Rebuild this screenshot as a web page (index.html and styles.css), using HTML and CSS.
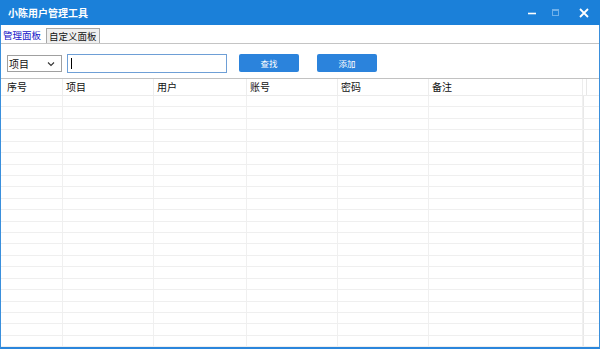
FILE: index.html
```html
<!DOCTYPE html>
<html lang="zh">
<head>
<meta charset="utf-8">
<title>小陈用户管理工具</title>
<link rel="stylesheet" href="styles.css">
</head>
<body>
<div class="window">
  <div class="titlebar">
    <span class="title">小陈用户管理工具</span>
    <div class="controls">
      <svg class="ctl ctl-min" width="10" height="10" viewBox="0 0 10 10"><path d="M1 5.5h8" stroke="#fff" stroke-width="1.6"/></svg>
      <svg class="ctl ctl-max" width="10" height="10" viewBox="0 0 10 10"><rect x="1.5" y="1.5" width="6" height="6" fill="none" stroke="#6fb0ea" stroke-width="1"/><path d="M1.5 2.5h6" stroke="#6fb0ea" stroke-width="1"/></svg>
      <svg class="ctl ctl-close" width="12" height="12" viewBox="0 0 12 12"><path d="M2 2l8 8M10 2l-8 8" stroke="#fff" stroke-width="1.8"/></svg>
    </div>
  </div>
  <div class="client">
    <div class="tabs">
      <div class="tab active">管理面板</div>
      <div class="tab">自定义面板</div>
    </div>
    <div class="toolbar">
      <div class="select"><span>项目</span><svg width="8" height="6" viewBox="0 0 8 6"><path d="M1 1.5l3 3 3-3" fill="none" stroke="#333" stroke-width="1.1"/></svg></div>
      <div class="input"><span class="caret"></span></div>
      <button class="btn btn-search">查找</button>
      <button class="btn btn-add">添加</button>
    </div>
    <div class="table">
      <div class="row head">
        <div class="cell first">序号</div><div class="cell">项目</div><div class="cell">用户</div><div class="cell">账号</div><div class="cell">密码</div><div class="cell">备注</div><div class="cell"></div>
      </div>
      <div class="body">
        <div class="row"><div class="cell"></div><div class="cell"></div><div class="cell"></div><div class="cell"></div><div class="cell"></div><div class="cell"></div><div class="cell"></div></div>
        <div class="row"><div class="cell"></div><div class="cell"></div><div class="cell"></div><div class="cell"></div><div class="cell"></div><div class="cell"></div><div class="cell"></div></div>
        <div class="row"><div class="cell"></div><div class="cell"></div><div class="cell"></div><div class="cell"></div><div class="cell"></div><div class="cell"></div><div class="cell"></div></div>
        <div class="row"><div class="cell"></div><div class="cell"></div><div class="cell"></div><div class="cell"></div><div class="cell"></div><div class="cell"></div><div class="cell"></div></div>
        <div class="row"><div class="cell"></div><div class="cell"></div><div class="cell"></div><div class="cell"></div><div class="cell"></div><div class="cell"></div><div class="cell"></div></div>
        <div class="row"><div class="cell"></div><div class="cell"></div><div class="cell"></div><div class="cell"></div><div class="cell"></div><div class="cell"></div><div class="cell"></div></div>
        <div class="row"><div class="cell"></div><div class="cell"></div><div class="cell"></div><div class="cell"></div><div class="cell"></div><div class="cell"></div><div class="cell"></div></div>
        <div class="row"><div class="cell"></div><div class="cell"></div><div class="cell"></div><div class="cell"></div><div class="cell"></div><div class="cell"></div><div class="cell"></div></div>
        <div class="row"><div class="cell"></div><div class="cell"></div><div class="cell"></div><div class="cell"></div><div class="cell"></div><div class="cell"></div><div class="cell"></div></div>
        <div class="row"><div class="cell"></div><div class="cell"></div><div class="cell"></div><div class="cell"></div><div class="cell"></div><div class="cell"></div><div class="cell"></div></div>
        <div class="row"><div class="cell"></div><div class="cell"></div><div class="cell"></div><div class="cell"></div><div class="cell"></div><div class="cell"></div><div class="cell"></div></div>
        <div class="row"><div class="cell"></div><div class="cell"></div><div class="cell"></div><div class="cell"></div><div class="cell"></div><div class="cell"></div><div class="cell"></div></div>
        <div class="row"><div class="cell"></div><div class="cell"></div><div class="cell"></div><div class="cell"></div><div class="cell"></div><div class="cell"></div><div class="cell"></div></div>
        <div class="row"><div class="cell"></div><div class="cell"></div><div class="cell"></div><div class="cell"></div><div class="cell"></div><div class="cell"></div><div class="cell"></div></div>
        <div class="row"><div class="cell"></div><div class="cell"></div><div class="cell"></div><div class="cell"></div><div class="cell"></div><div class="cell"></div><div class="cell"></div></div>
        <div class="row"><div class="cell"></div><div class="cell"></div><div class="cell"></div><div class="cell"></div><div class="cell"></div><div class="cell"></div><div class="cell"></div></div>
        <div class="row"><div class="cell"></div><div class="cell"></div><div class="cell"></div><div class="cell"></div><div class="cell"></div><div class="cell"></div><div class="cell"></div></div>
        <div class="row"><div class="cell"></div><div class="cell"></div><div class="cell"></div><div class="cell"></div><div class="cell"></div><div class="cell"></div><div class="cell"></div></div>
        <div class="row"><div class="cell"></div><div class="cell"></div><div class="cell"></div><div class="cell"></div><div class="cell"></div><div class="cell"></div><div class="cell"></div></div>
        <div class="row"><div class="cell"></div><div class="cell"></div><div class="cell"></div><div class="cell"></div><div class="cell"></div><div class="cell"></div><div class="cell"></div></div>
        <div class="row"><div class="cell"></div><div class="cell"></div><div class="cell"></div><div class="cell"></div><div class="cell"></div><div class="cell"></div><div class="cell"></div></div>
        <div class="row"><div class="cell"></div><div class="cell"></div><div class="cell"></div><div class="cell"></div><div class="cell"></div><div class="cell"></div><div class="cell"></div></div>
      </div>
    </div>
  </div>
</div>
</body>
</html>
```
FILE: styles.css
```css
* { box-sizing: border-box; }
html, body { margin: 0; padding: 0; }
body {
  width: 600px;
  height: 349px;
  overflow: hidden;
  background: #fff;
  font-family: "Noto Sans CJK SC", "Noto Sans", sans-serif;
  color: #222;
}
.window {
  width: 600px;
  height: 349px;
  display: flex;
  flex-direction: column;
}
.titlebar {
  height: 25px;
  flex: 0 0 25px;
  background: #1b80d9;
  display: flex;
  align-items: center;
  justify-content: space-between;
  padding-left: 8px;
}
.title {
  color: #fff;
  font-weight: bold;
  font-size: 10px;
  line-height: 12px;
}
.controls {
  display: flex;
  align-items: center;
  height: 25px;
}
.ctl { display: block; }
.ctl-min { margin-right: 14px; }
.ctl-max { margin-right: 17px; }
.ctl-close { margin-right: 10px; }
.client {
  flex: 1;
  display: flex;
  flex-direction: column;
  border-left: 1px solid #3a8fdc;
  border-right: 1px solid #3a8fdc;
  border-bottom: 2px solid #2a86dc;
  min-height: 0;
}
.tabs {
  margin-top: 2px;
  height: 17px;
  display: flex;
  align-items: flex-end;
  border-bottom: 1px solid #c4c4c4;
}
.tab {
  font-size: 9.5px;
  line-height: 12px;
  height: 15px;
  padding: 1px 2px 0 2px;
  background: #f0f0f0;
  border: 1px solid #a8a8a8;
  border-bottom: none;
  color: #111;
}
.tab.active {
  height: 17px;
  padding: 3px 4px 0 2px;
  background: #fff;
  border: none;
  color: #1515c8;
  margin-right: 1px;
}
.toolbar {
  margin-top: 10px;
  height: 19px;
  display: flex;
  align-items: flex-start;
  padding-left: 6px;
}
.select {
  margin-top: 1px;
  width: 55px;
  height: 17px;
  border: 1px solid #a0a0a0;
  display: flex;
  align-items: center;
  justify-content: space-between;
  padding: 0 6px 0 1px;
  font-size: 10px;
  color: #111;
}
.input {
  margin-left: 5px;
  width: 160px;
  height: 19px;
  border: 1px solid #6e9fd6;
  display: flex;
  align-items: center;
  padding-left: 3px;
}
.caret {
  width: 1px;
  height: 11px;
  background: #000;
}
.btn {
  height: 18px;
  width: 60px;
  border: none;
  border-radius: 2px;
  background: #2b83dc;
  color: #fff;
  font-family: "Noto Sans CJK SC", "Noto Sans", sans-serif;
  font-size: 8.5px;
  padding: 0;
}
.btn-search { margin-left: 12px; }
.btn-add { margin-left: 18px; }
.table {
  margin-top: 5px;
  border-top: 1px solid #c2c2c2;
  flex: 1;
  display: flex;
  flex-direction: column;
  min-height: 0;
  overflow: hidden;
}
.row {
  display: grid;
  grid-template-columns: 62px 91px 93px 91px 91px 154px 1fr;
  height: 11.43px;
  flex: 0 0 auto;
  border-bottom: 1px solid #efefef;
}
.row.head {
  height: 17px;
  border-bottom: 1px solid #ececec;
}
.cell {
  border-right: 1px solid #f0f0f0;
}
.row .cell:last-child { border-right: 1px solid #e8e8e8; margin-right: 15px; }
.head .cell {
  font-size: 10px;
  line-height: 16px;
  padding-left: 3px;
  color: #111;
  border-right-color: #ededed;
}
.head .cell.first { padding-left: 6px; }
.body {
  flex: 1;
  display: flex;
  flex-direction: column;
  overflow: hidden;
}
```
